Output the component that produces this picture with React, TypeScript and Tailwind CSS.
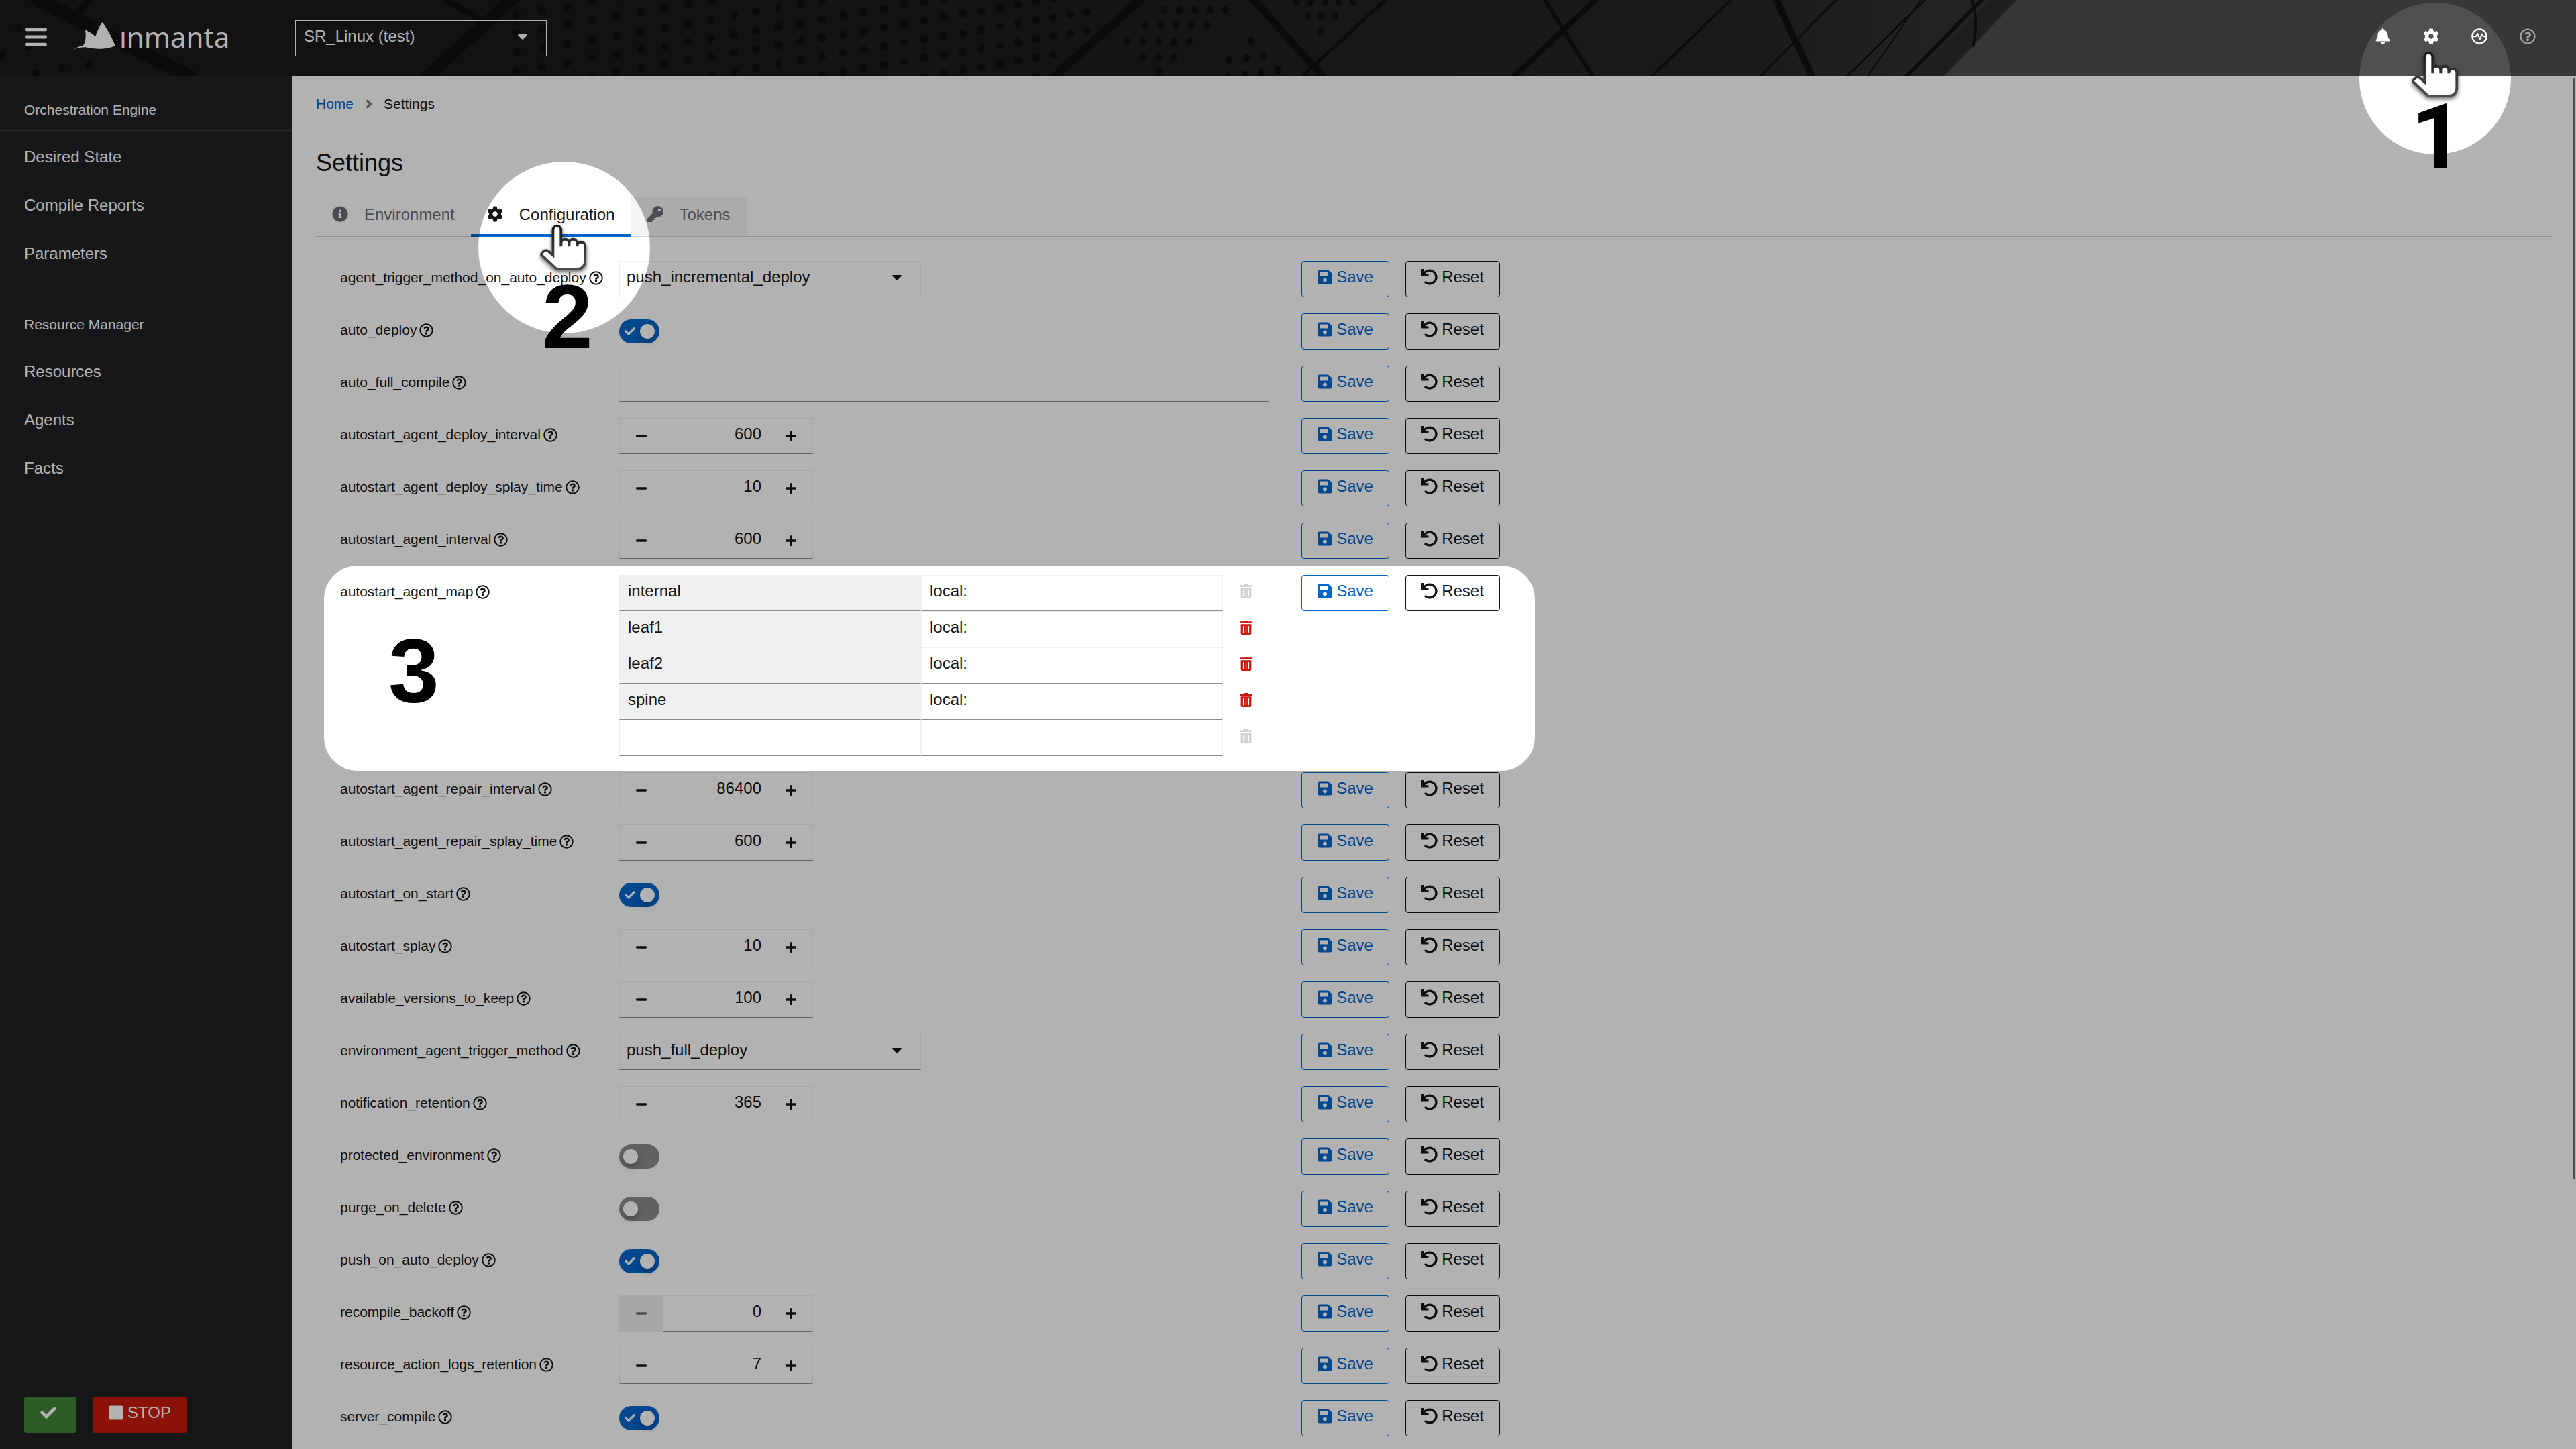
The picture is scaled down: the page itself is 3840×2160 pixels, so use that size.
import React, { useState } from "react";
import {
  FaAngleRight,
  FaBars,
  FaBell,
  FaCaretDown,
  FaCheck,
  FaCog,
  FaInfoCircle,
  FaKey,
  FaMinus,
  FaPlus,
  FaRegQuestionCircle,
  FaSave,
  FaStop,
  FaTrashAlt,
  FaUndo,
} from "react-icons/fa";

/* ---------- header ---------- */

type Dot = [number, number];

const dotRow = (from: number, to: number, step: number, y: number): Dot[] => {
  const out: Dot[] = [];
  for (let x = from; x <= to; x += step) out.push([x, y]);
  return out;
};

const fieldDots: Dot[] = [];
for (let row = 0; row < 12; row++) {
  let x = 770;
  let step = 38;
  while (x < 1640) {
    const y = 6 + row * 28 - (x - 770) * 0.17 - 40;
    if (y > -6 && y < 120 && x < 1675 - y * 1.1 && x > 790 - y * 1.1) fieldDots.push([x, y]);
    x += step;
    step -= 0.5;
  }
}

const groupDots: Dot[] = [
  ...dotRow(1735, 1827, 23, 15),
  ...dotRow(1707, 1802, 23, 38),
  ...dotRow(1681, 1776, 23, 62),
  ...dotRow(1704, 1751, 23, 85),
  [1727, 107],
  ...dotRow(1933, 2018, 21, 3),
  ...dotRow(1950, 1992, 20, 24),
  [1968, 47],
  [1865, 61],
  [1832, 90],
  [1858, 87],
  [1883, 84],
  [1830, 114],
  [1856, 111],
  [1880, 108],
  [1905, 105],
  [28, 42],
  [42, 70],
  [4, 82],
  [92, 101],
  [132, 97],
  [54, 109],
];

const beams: [number, number, number, number, number][] = [
  [58, 0, 282, 114, 20],
  [132, 0, 112, 26, 12],
  [762, 0, 637, 114, 18],
  [664, 0, 713, 27, 9],
  [1699, 0, 1572, 114, 13],
  [1869, 0, 1972, 114, 11],
  [2065, 0, 1941, 114, 5],
  [2303, 0, 2374, 114, 6],
  [2378, 0, 2257, 114, 8],
  [2580, 0, 2462, 114, 4],
  [2648, 0, 2701, 114, 10],
  [2737, 0, 2624, 114, 3],
  [2869, 0, 2753, 114, 3],
  [2954, 0, 2842, 114, 6],
  [2863, 0, 2784, 114, 2],
];

function HeaderBackdrop() {
  return (
    <svg
      aria-hidden="true"
      className="absolute inset-0 h-full w-full"
      viewBox="0 0 3840 114"
      preserveAspectRatio="xMidYMid slice"
    >
      <defs>
        <linearGradient id="glass" x1="0" x2="1">
          <stop offset="0" stopColor="#1a1a1a" />
          <stop offset="0.4" stopColor="#1c1c1c" />
          <stop offset="0.55" stopColor="#222222" />
          <stop offset="0.68" stopColor="#262626" />
          <stop offset="0.75" stopColor="#333333" />
          <stop offset="1" stopColor="#343434" />
        </linearGradient>
      </defs>
      <rect width="3840" height="114" fill="url(#glass)" />
      <path d="M3007 0H3840V114H2898Z" fill="#505050" />
      <path d="M2968 0H3003L2894 114H2850Z" fill="#2b2b2b" />
      {[...fieldDots, ...groupDots].map(([x, y], i) => (
        <ellipse key={i} cx={x} cy={y} rx={i < fieldDots.length ? 6 : 5} ry="6" fill="#101010" />
      ))}
      {beams.map(([x1, y1, x2, y2, w], i) => (
        <line key={i} x1={x1} y1={y1} x2={x2} y2={y2} stroke="#101010" strokeWidth={w} strokeLinecap="square" />
      ))}
      <path d="M2939 0Q2950 30 2941 70" fill="none" stroke="#101010" strokeWidth="4" />
    </svg>
  );
}

function Logo() {
  return (
    <a href="#home" aria-label="inmanta" className="flex items-center gap-0.5 text-white">
      <svg aria-hidden="true" className="h-12 w-18" viewBox="48 42 216 144">
        <path
          fill="currentColor"
          d="M194 48C214 76 238 116 251 153Q226 166 186 167Q148 168 118 160Q84 161 56 172Q82 158 108 152C120 136 121 104 117 82Q142 94 163 112Q172 78 194 48Z"
        />
      </svg>
      <span className="font-['Noto_Sans',sans-serif] text-[42px] leading-12">ınmanta</span>
    </a>
  );
}

function HeartbeatIcon() {
  return (
    <svg aria-hidden="true" className="h-6 w-6" viewBox="0 0 72 72" fill="none" stroke="currentColor" strokeWidth="7">
      <circle cx="36" cy="36" r="32" />
      <path d="M5 37H20L28 24L38 50L48 26L54 37H67" strokeLinejoin="round" strokeWidth="6" />
    </svg>
  );
}

function Header() {
  return (
    <header className="relative flex h-[114px] shrink-0 items-center justify-between text-white">
      <HeaderBackdrop />
      <div className="relative flex items-center">
        <div className="flex w-[440px] items-center gap-8 pb-1 pl-9">
          <button type="button" aria-label="Global navigation">
            <FaBars className="h-9 w-9" />
          </button>
          <Logo />
        </div>
        <div className="relative w-[375px]">
          <select
            aria-label="Environment"
            className="h-[54px] w-full appearance-none border border-white bg-transparent pb-1.5 pl-3 pr-10 text-[24px]"
          >
            <option>SR_Linux (test)</option>
          </select>
          <FaCaretDown className="pointer-events-none absolute right-6 top-3 h-6 w-6" />
        </div>
      </div>
      <div className="relative flex gap-12 pb-1.5 pr-[60px]">
        <button type="button" aria-label="Notifications">
          <FaBell className="h-6 w-6" />
        </button>
        <button type="button" aria-label="Settings">
          <FaCog className="h-6 w-6" />
        </button>
        <button type="button" aria-label="Status">
          <HeartbeatIcon />
        </button>
        <button type="button" aria-label="Help">
          <FaRegQuestionCircle className="h-6 w-6 text-[#e8e8e8]" />
        </button>
      </div>
    </header>
  );
}

/* ---------- sidebar ---------- */

function NavSection({ title, items }: { title: string; items: string[] }) {
  return (
    <section className="pb-5">
      <h2 className="mb-[3px] h-[81px] border-b border-[#3c3f42] pl-9 pt-[34px] text-[21px] leading-8">{title}</h2>
      <ul>
        {items.map((item) => (
          <li key={item}>
            <a href="#nav" className="block py-[18px] pl-9 text-[24px] leading-9">
              {item}
            </a>
          </li>
        ))}
      </ul>
    </section>
  );
}

function Sidebar() {
  return (
    <nav
      aria-label="Main"
      className="flex w-[435px] shrink-0 flex-col justify-between bg-[#1f2124] text-white"
    >
      <div>
        <NavSection title="Orchestration Engine" items={["Desired State", "Compile Reports", "Parameters"]} />
        <NavSection title="Resource Manager" items={["Resources", "Agents", "Facts"]} />
      </div>
      <div className="flex gap-6 pb-6 pl-9">
        <button
          type="button"
          aria-label="Running"
          className="flex h-[54px] w-[78px] items-center rounded bg-[#3e8635] pb-1.5 pl-6"
        >
          <FaCheck className="h-6 w-6" />
        </button>
        <button type="button" className="flex h-[54px] items-center gap-1.5 rounded bg-[#c9190b] px-6 pb-1.5 text-[24px]">
          <FaStop className="h-6 w-[22px]" />
          STOP
        </button>
      </div>
    </nav>
  );
}

/* ---------- settings ---------- */

type Setting =
  | { name: string; kind: "select"; value: string }
  | { name: string; kind: "toggle"; value: boolean }
  | { name: string; kind: "text" }
  | { name: string; kind: "number"; value: number }
  | { name: string; kind: "map"; entries: [string, string][] };

const settings: Setting[] = [
  { name: "agent_trigger_method_on_auto_deploy", kind: "select", value: "push_incremental_deploy" },
  { name: "auto_deploy", kind: "toggle", value: true },
  { name: "auto_full_compile", kind: "text" },
  { name: "autostart_agent_deploy_interval", kind: "number", value: 600 },
  { name: "autostart_agent_deploy_splay_time", kind: "number", value: 10 },
  { name: "autostart_agent_interval", kind: "number", value: 600 },
  {
    name: "autostart_agent_map",
    kind: "map",
    entries: [
      ["internal", "local:"],
      ["leaf1", "local:"],
      ["leaf2", "local:"],
      ["spine", "local:"],
      ["", ""],
    ],
  },
  { name: "autostart_agent_repair_interval", kind: "number", value: 86400 },
  { name: "autostart_agent_repair_splay_time", kind: "number", value: 600 },
  { name: "autostart_on_start", kind: "toggle", value: true },
  { name: "autostart_splay", kind: "number", value: 10 },
  { name: "available_versions_to_keep", kind: "number", value: 100 },
  { name: "environment_agent_trigger_method", kind: "select", value: "push_full_deploy" },
  { name: "notification_retention", kind: "number", value: 365 },
  { name: "protected_environment", kind: "toggle", value: false },
  { name: "purge_on_delete", kind: "toggle", value: false },
  { name: "push_on_auto_deploy", kind: "toggle", value: true },
  { name: "recompile_backoff", kind: "number", value: 0 },
  { name: "resource_action_logs_retention", kind: "number", value: 7 },
  { name: "server_compile", kind: "toggle", value: true },
];

const fieldBorder = "border border-[#f0f0f0] border-b-[#8a8d90]";

function NumberField({ id, initial }: { id: string; initial: number }) {
  const [value, setValue] = useState(initial);
  const atMin = value <= 0;
  return (
    <div className="flex h-[54px]">
      <button
        type="button"
        aria-label="Minus"
        disabled={atMin}
        onClick={() => setValue(value - 1)}
        className={`flex w-[66px] items-center justify-center ${
          atMin ? "bg-[#f0f0f0] text-[#6a6e73]" : "border border-[#f0f0f0] border-b-[#8a8d90]"
        }`}
      >
        <FaMinus className="h-[18px] w-[18px]" />
      </button>
      <input
        id={id}
        inputMode="numeric"
        value={value}
        onChange={(e) => setValue(Number(e.target.value) || 0)}
        className="w-[157px] border-b border-[#8a8d90] border-t border-t-[#f0f0f0] bg-transparent pb-1.5 pr-[11px] text-right text-[24px]"
      />
      <button
        type="button"
        aria-label="Plus"
        onClick={() => setValue(value + 1)}
        className={`flex w-[66px] items-center justify-center ${fieldBorder}`}
      >
        <FaPlus className="h-[18px] w-[18px]" />
      </button>
    </div>
  );
}

function Toggle({ id, initial }: { id: string; initial: boolean }) {
  const [on, setOn] = useState(initial);
  return (
    <div className="flex h-[54px] items-center">
      <label className="relative flex">
        <input id={id} type="checkbox" role="switch" checked={on} onChange={() => setOn(!on)} className="sr-only" />
        <span
          className={`flex h-9 w-[60px] items-center rounded-full ${
            on ? "justify-between bg-[#0066cc] pl-2 pr-[7px]" : "bg-[#8a8d90] pl-[6px]"
          }`}
        >
          {on && <FaCheck className="h-4 w-4 text-white" />}
          <span className="h-[22px] w-[22px] rounded-full bg-white shadow-[0_5px_10px_rgba(3,3,3,0.25)]" />
        </span>
      </label>
    </div>
  );
}

function SelectField({ id, value }: { id: string; value: string }) {
  return (
    <div className="relative w-[450px]">
      <select
        id={id}
        className={`h-[54px] w-full appearance-none bg-transparent pb-1.5 pl-[10px] pr-12 text-[24px] ${fieldBorder}`}
      >
        <option>{value}</option>
      </select>
      <FaCaretDown className="pointer-events-none absolute right-6 top-3 h-6 w-6" />
    </div>
  );
}

function MapField({ id, entries }: { id: string; entries: [string, string][] }) {
  return (
    <div id={id} role="group">
      {entries.map(([key, value], i) => {
        const removable = i > 0 && key !== "";
        return (
          <div key={i} className="flex h-[54px]">
            <input
              aria-label="Key"
              defaultValue={key}
              readOnly={key !== ""}
              className={`w-[450px] pb-1.5 pl-3 text-[24px] ${fieldBorder} ${key ? "bg-[#f0f0f0]" : "bg-white"}`}
            />
            <input
              aria-label="Value"
              defaultValue={value}
              className={`w-[450px] bg-white pb-1.5 pl-3 text-[24px] ${fieldBorder}`}
            />
            <button
              type="button"
              aria-label="Delete"
              disabled={!removable}
              className={`px-6 pb-1.5 ${removable ? "text-[#c9190b]" : "text-[#d2d2d2]"}`}
            >
              <FaTrashAlt className="h-[21px] w-[21px]" />
            </button>
          </div>
        );
      })}
    </div>
  );
}

function Control({ setting }: { setting: Setting }) {
  const id = setting.name;
  switch (setting.kind) {
    case "select":
      return <SelectField id={id} value={setting.value} />;
    case "toggle":
      return <Toggle id={id} initial={setting.value} />;
    case "text":
      return <input id={id} className={`h-[54px] w-full bg-transparent px-3 text-[24px] ${fieldBorder}`} />;
    case "number":
      return <NumberField id={id} initial={setting.value} />;
    case "map":
      return <MapField id={id} entries={setting.entries} />;
  }
}

function SettingRow({ setting }: { setting: Setting }) {
  return (
    <div className="grid grid-cols-[416px_969px_auto] items-start">
      <div className="flex h-[54px] items-center gap-1 pb-1">
        <label htmlFor={setting.name} className="text-[21px] leading-8">
          {setting.name}
        </label>
        <FaRegQuestionCircle className="h-[21px] w-[21px]" />
      </div>
      <Control setting={setting} />
      <div className="flex gap-6 pl-12">
        <button
          type="button"
          className="flex h-[54px] w-[131px] items-center justify-center gap-1.5 rounded border border-[#0066cc] pb-1.5 text-[24px] text-[#0066cc]"
        >
          <FaSave className="h-6 w-[22px]" />
          Save
        </button>
        <button
          type="button"
          className="flex h-[54px] w-[141px] items-center justify-center gap-1.5 rounded border border-[#151515] pb-1.5 text-[24px]"
        >
          <FaUndo className="h-6 w-6" />
          Reset
        </button>
      </div>
    </div>
  );
}

function Tabs() {
  return (
    <div
      role="tablist"
      className="mt-[26px] flex h-[60px] items-stretch border-b border-[#d2d2d2] text-[24px] leading-9 text-[#6a6e73]"
    >
      <button type="button" role="tab" className="flex gap-6 px-6 pt-[9px]">
        <FaInfoCircle className="mt-[5px] h-6 w-6" />
        Environment
      </button>
      <button
        type="button"
        role="tab"
        aria-selected="true"
        className="-mb-px flex gap-6 border-b-4 border-[#0066cc] px-6 pt-[9px] text-[#151515]"
      >
        <FaCog className="mt-[5px] h-6 w-6" />
        Configuration
      </button>
      <button type="button" role="tab" className="flex gap-6 bg-[#f5f5f5] px-6 pt-[9px]">
        <FaKey className="mt-[5px] h-6 w-6" />
        Tokens
      </button>
    </div>
  );
}

function SettingsPage() {
  return (
    <main className="min-w-0 flex-1 overflow-hidden bg-white px-9 pt-[25px]">
      <nav aria-label="Breadcrumb" className="flex items-center text-[21px] leading-8">
        <a href="#home" className="text-[#0066cc]">
          Home
        </a>
        <span className="flex w-[45px] justify-center">
          <FaAngleRight className="h-5 w-5 text-[#6a6e73]" />
        </span>
        <span>Settings</span>
      </nav>
      <h1 className="mt-12 text-[36px] leading-12">Settings</h1>
      <Tabs />
      <form className="flex flex-col gap-6 pl-9 pt-9">
        {settings.map((s) => (
          <SettingRow key={s.name} setting={s} />
        ))}
      </form>
    </main>
  );
}

/* ---------- walkthrough overlay ---------- */

function Hand({ className }: { className: string }) {
  return (
    <svg
      className={`absolute h-[75px] w-[75px] overflow-visible drop-shadow-[0_3px_3px_rgba(0,0,0,0.6)] ${className}`}
      viewBox="215 165 225 225"
    >
      <defs>
        <linearGradient id="handEdge" x1="0" y1="0" x2="0" y2="1">
          <stop offset="0" stopColor="#1c1c1c" />
          <stop offset="1" stopColor="#4c4c4c" />
        </linearGradient>
      </defs>
      <path
        d="M288 194a12 12 0 0 1 24 0V268H324V254a12 12 0 0 1 24 0V268H360V254a12 12 0 0 1 24 0V268H396V266a12 12 0 0 1 24 0V332Q420 363 384 363H300L236 303Q247 285 258 294L288 320Z"
        fill="#fff"
        stroke="url(#handEdge)"
        strokeWidth="23"
        strokeLinejoin="round"
        paintOrder="stroke"
      />
    </svg>
  );
}

function Walkthrough() {
  return (
    <div className="pointer-events-none absolute inset-0 overflow-hidden text-[136px] font-bold leading-none text-black">
      <svg aria-hidden="true" className="absolute inset-0 h-full w-full">
        <mask id="spotlights">
          <rect width="100%" height="100%" fill="#fff" />
          <svg x="100%" overflow="visible">
            <circle cx="-210" cy="117" r="113" fill="#000" />
          </svg>
          <circle cx="841" cy="369" r="128" fill="#000" />
          <rect x="483" y="843" width="1805" height="306" rx="50" fill="#000" />
        </mask>
        <rect width="100%" height="100%" fill="#000" fillOpacity="0.3" mask="url(#spotlights)" />
      </svg>
      <Hand className="right-[173px] top-[75px]" />
      <span className="absolute right-[168px] top-[137px] font-['Roboto',sans-serif]">1</span>
      <Hand className="left-[802px] top-[333px]" />
      <span className="absolute left-[808px] top-[404px]">2</span>
      <span className="absolute left-[579px] top-[931px]">3</span>
    </div>
  );
}

export default function App() {
  return (
    <div className="relative flex h-screen flex-col overflow-hidden font-['Liberation_Sans',Arial,sans-serif] text-[#151515]">
      <Header />
      <div className="flex min-h-0 flex-1">
        <Sidebar />
        <SettingsPage />
      </div>
      <div className="absolute right-px top-[116px] h-[76%] w-[3px] rounded-full bg-[#737373]" />
      <Walkthrough />
    </div>
  );
}
